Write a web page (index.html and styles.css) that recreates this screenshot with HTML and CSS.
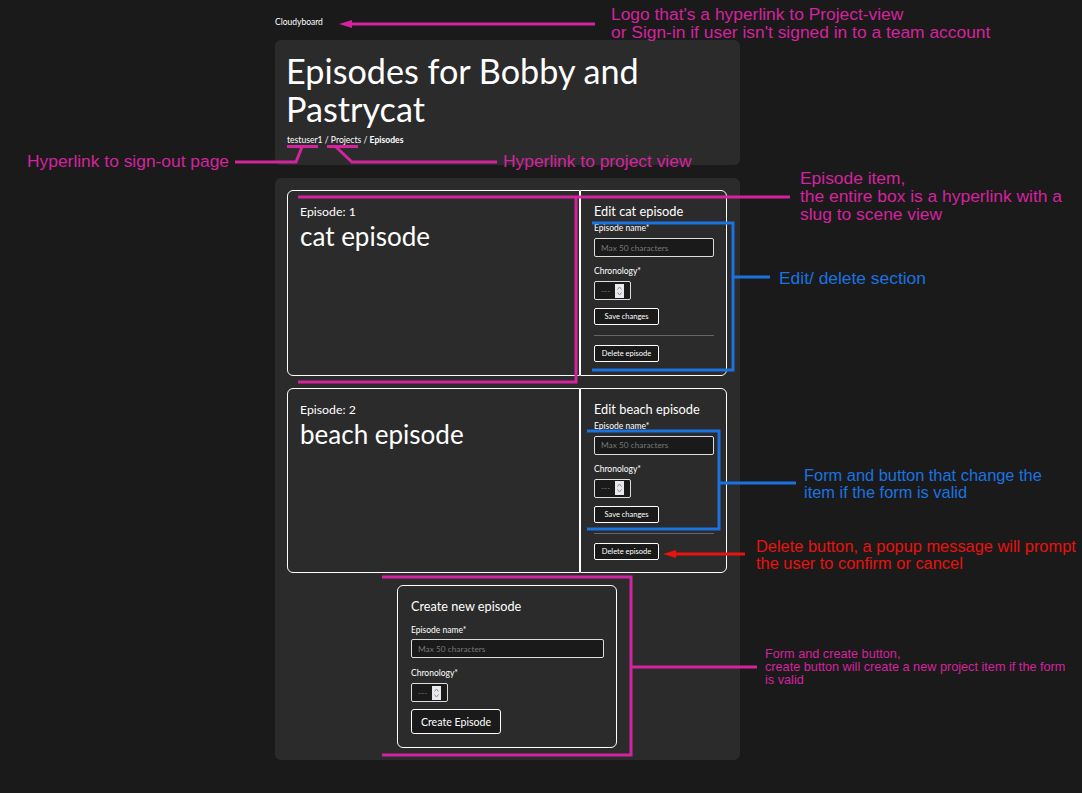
FILE: index.html
```html
<!DOCTYPE html>
<html lang="en">
<head>
<meta charset="utf-8">
<title>Episodes</title>
<link rel="stylesheet" href="styles.css">
</head>
<body>
<div class="page">
  <nav class="nav"><a class="logo" href="#">Cloudyboard</a></nav>
  <header class="card head">
    <h1>Episodes for Bobby and Pastrycat</h1>
    <div class="crumbs"><a href="#">testuser1</a> / <a href="#">Projects</a> / <b>Episodes</b></div>
  </header>
  <main class="card list">
    <section class="episode">
      <a class="ep-link" href="#">
        <span class="ep-num">Episode: 1</span>
        <span class="ep-name">cat episode</span>
      </a>
      <div class="ep-edit">
        <h2>Edit cat episode</h2>
        <form class="form">
          <label class="lab">Episode name*</label>
          <input class="txt" type="text" placeholder="Max 50 characters">
          <label class="lab lab2">Chronology*</label>
          <div class="num">
            <input class="num-in" type="text" inputmode="numeric" placeholder="---">
            <svg class="spin" width="9" height="14" viewBox="0 0 9 14" fill="none"><rect width="9" height="14" fill="#e9e9ed"/><path d="M2.5 5.5L4.5 3L6.5 5.5M2.5 8.5L4.5 11L6.5 8.5" stroke="#8a8a8a"/></svg>
          </div>
          <button class="btn save" type="button">Save changes</button>
        </form>
        <hr class="rule">
        <button class="btn" type="button">Delete episode</button>
      </div>
    </section>
    <section class="episode">
      <a class="ep-link" href="#">
        <span class="ep-num">Episode: 2</span>
        <span class="ep-name">beach episode</span>
      </a>
      <div class="ep-edit">
        <h2>Edit beach episode</h2>
        <form class="form">
          <label class="lab">Episode name*</label>
          <input class="txt" type="text" placeholder="Max 50 characters">
          <label class="lab lab2">Chronology*</label>
          <div class="num">
            <input class="num-in" type="text" inputmode="numeric" placeholder="---">
            <svg class="spin" width="9" height="14" viewBox="0 0 9 14" fill="none"><rect width="9" height="14" fill="#e9e9ed"/><path d="M2.5 5.5L4.5 3L6.5 5.5M2.5 8.5L4.5 11L6.5 8.5" stroke="#8a8a8a"/></svg>
          </div>
          <button class="btn save" type="button">Save changes</button>
        </form>
        <hr class="rule">
        <button class="btn" type="button">Delete episode</button>
      </div>
    </section>
    <section class="create">
      <h2>Create new episode</h2>
      <form class="form">
        <label class="lab lab-c">Episode name*</label>
        <input class="txt txt-c" type="text" placeholder="Max 50 characters">
        <label class="lab lab2 lab2-c">Chronology*</label>
        <div class="num">
          <input class="num-in" type="text" inputmode="numeric" placeholder="---">
          <svg class="spin" width="9" height="14" viewBox="0 0 9 14" fill="none"><rect width="9" height="14" fill="#e9e9ed"/><path d="M2.5 5.5L4.5 3L6.5 5.5M2.5 8.5L4.5 11L6.5 8.5" stroke="#8a8a8a"/></svg>
        </div>
        <button class="btn btn-lg" type="button">Create Episode</button>
      </form>
    </section>
  </main>
</div>

<svg class="marks" width="1082" height="793" viewBox="0 0 1082 793" fill="none" aria-hidden="true">
  <g class="m-pink">
    <path d="M595 24H350"/>
    <path d="M287 146.5H318M302 147L296 162H235"/>
    <path d="M327 146.5H358M336 147L352 162H497"/>
    <path d="M298 197H790M576 197V382H298"/>
    <path d="M382 577H631V755H382M631 667H757"/>
  </g>
  <path class="f-pink" d="M339 24L352 20V28Z"/>
  <g class="m-blue">
    <path d="M592 223H733V370H592M733 277H770"/>
    <path d="M587 431H719V529H587M719 483H796"/>
  </g>
  <path class="m-red" d="M745 554H675"/>
  <path class="f-red" d="M663 554L676 550V558Z"/>
</svg>

<p class="note pink big n1">Logo that's a hyperlink to Project-view<br>or Sign-in if user isn't signed in to a team account</p>
<p class="note pink big n2">Hyperlink to sign-out page</p>
<p class="note pink big n3">Hyperlink to project view</p>
<p class="note pink big n4">Episode item,<br>the entire box is a hyperlink with a<br>slug to scene view</p>
<p class="note blue big n5">Edit/ delete section</p>
<p class="note blue mid n6">Form and button that change the<br>item if the form is valid</p>
<p class="note red mid n7">Delete button, a popup message will prompt<br>the user to confirm or cancel</p>
<p class="note pink small n8">Form and create button,<br>create button will create a new project item if the form<br>is valid</p>
</body>
</html>
```
FILE: styles.css
```css
* { box-sizing: border-box; }
html, body { margin: 0; height: 793px; overflow: hidden; }
body {
  background: #1a1a1a;
  color: #fff;
  font-family: "Lato", "Liberation Sans", sans-serif;
  position: relative;
}
a { color: inherit; text-decoration: none; }
.page { width: 465px; margin-left: 275px; display: flex; flex-direction: column; }
.nav { height: 40px; display: flex; align-items: center; padding-top: 3px; }
.logo { font-size: 8.5px; }
.card { background: #2b2b2b; border-radius: 6px; }
.head { height: 125px; padding: 12px 12px 0; margin-bottom: 13px; }
h1 { margin: 0 0 0 -1px; font-size: 34.2px; font-weight: 400; line-height: 38px; }
.crumbs { font-size: 8.6px; margin-top: 6px; line-height: 12px; }
.crumbs b { font-weight: 700; }
.list { height: 582px; padding: 12px 13px 12px 12px; display: flex; flex-direction: column; gap: 12px; }
.episode { display: flex; width: 440px; height: 186px; }
.ep-link {
  flex: 1;
  border: 1px solid #fff;
  border-radius: 6px 0 0 6px;
  padding: 14px 12px;
  display: flex;
  flex-direction: column;
}
.ep-num { font-size: 12.3px; line-height: 14px; }
.ep-name { font-size: 26px; line-height: 30px; margin-top: 2px; }
.ep-edit {
  width: 147px;
  border: 1px solid #fff;
  border-radius: 0 6px 6px 0;
  padding: 13px 13px 0;
}
h2 { margin: 0; font-size: 12.8px; font-weight: 400; line-height: 14px; }
.form { display: flex; flex-direction: column; align-items: flex-start; }
.lab { font-size: 8.5px; line-height: 10px; margin-top: 5px; }
.lab-c { margin-top: 12px; }
.lab2 { margin-top: 9px; }
.lab2-c { margin-top: 10px; }
.txt, .num {
  background: #1a1a1a;
  border: 1px solid #ddd;
  border-radius: 2px;
  color: #fff;
  font: inherit;
  font-size: 8.3px;
  height: 19px;
  margin-top: 5px;
}
.txt { width: 120px; padding: 0 6px; outline: none; }
.txt-c { margin-top: 4px; }
.num { width: 37px; display: flex; align-items: center; padding: 0 6px; }
.num-in {
  flex: 1;
  min-width: 0;
  background: transparent;
  border: 0;
  padding: 0;
  color: #fff;
  font: inherit;
  outline: none;
}
.spin { flex: none; }
.txt::placeholder, .num-in::placeholder { color: #777; }
.btn {
  background: #1a1a1a;
  border: 1px solid #fff;
  border-radius: 2px;
  color: #fff;
  font: inherit;
  font-size: 7.5px;
  width: 65px;
  height: 17px;
  padding: 0;
  display: block;
}
.save { margin-top: 8px; }
.rule { width: 120px; border: 0; border-top: 1px solid #666; margin: 10px 0 9px; }
.create {
  align-self: center;
  width: 220px;
  height: 163px;
  border: 1px solid #fff;
  border-radius: 6px;
  padding: 13px 13px 0;
}
.create h2 { font-size: 12.7px; }
.create .txt { width: 193px; }
.btn-lg { width: 90px; height: 25px; font-size: 10.6px; margin-top: 7px; border-radius: 3px; }
.marks { position: absolute; left: 0; top: 0; pointer-events: none; }
.m-pink path { stroke: #d4239f; stroke-width: 3; }
.m-blue path { stroke: #1a73e0; stroke-width: 3; }
.m-red { stroke: #e8120f; stroke-width: 3; }
.f-pink { fill: #d4239f; }
.f-red { fill: #e8120f; }
.note { position: absolute; margin: 0; font-family: "Liberation Sans", Arial, sans-serif; white-space: nowrap; }
.big { font-size: 17.4px; line-height: 18px; }
.mid { font-size: 16.4px; line-height: 17px; }
.small { font-size: 12.7px; line-height: 13px; }
.pink { color: #d4239f; }
.blue { color: #1a73e0; }
.red { color: #e8120f; }
.n1 { left: 611px; top: 5px; }
.n2 { left: 27px; top: 152px; }
.n3 { left: 503px; top: 152px; }
.n4 { left: 800px; top: 169px; }
.n5 { left: 779px; top: 269px; }
.n6 { left: 804px; top: 467px; }
.n7 { left: 756px; top: 538px; }
.n8 { left: 765px; top: 648px; }
```
